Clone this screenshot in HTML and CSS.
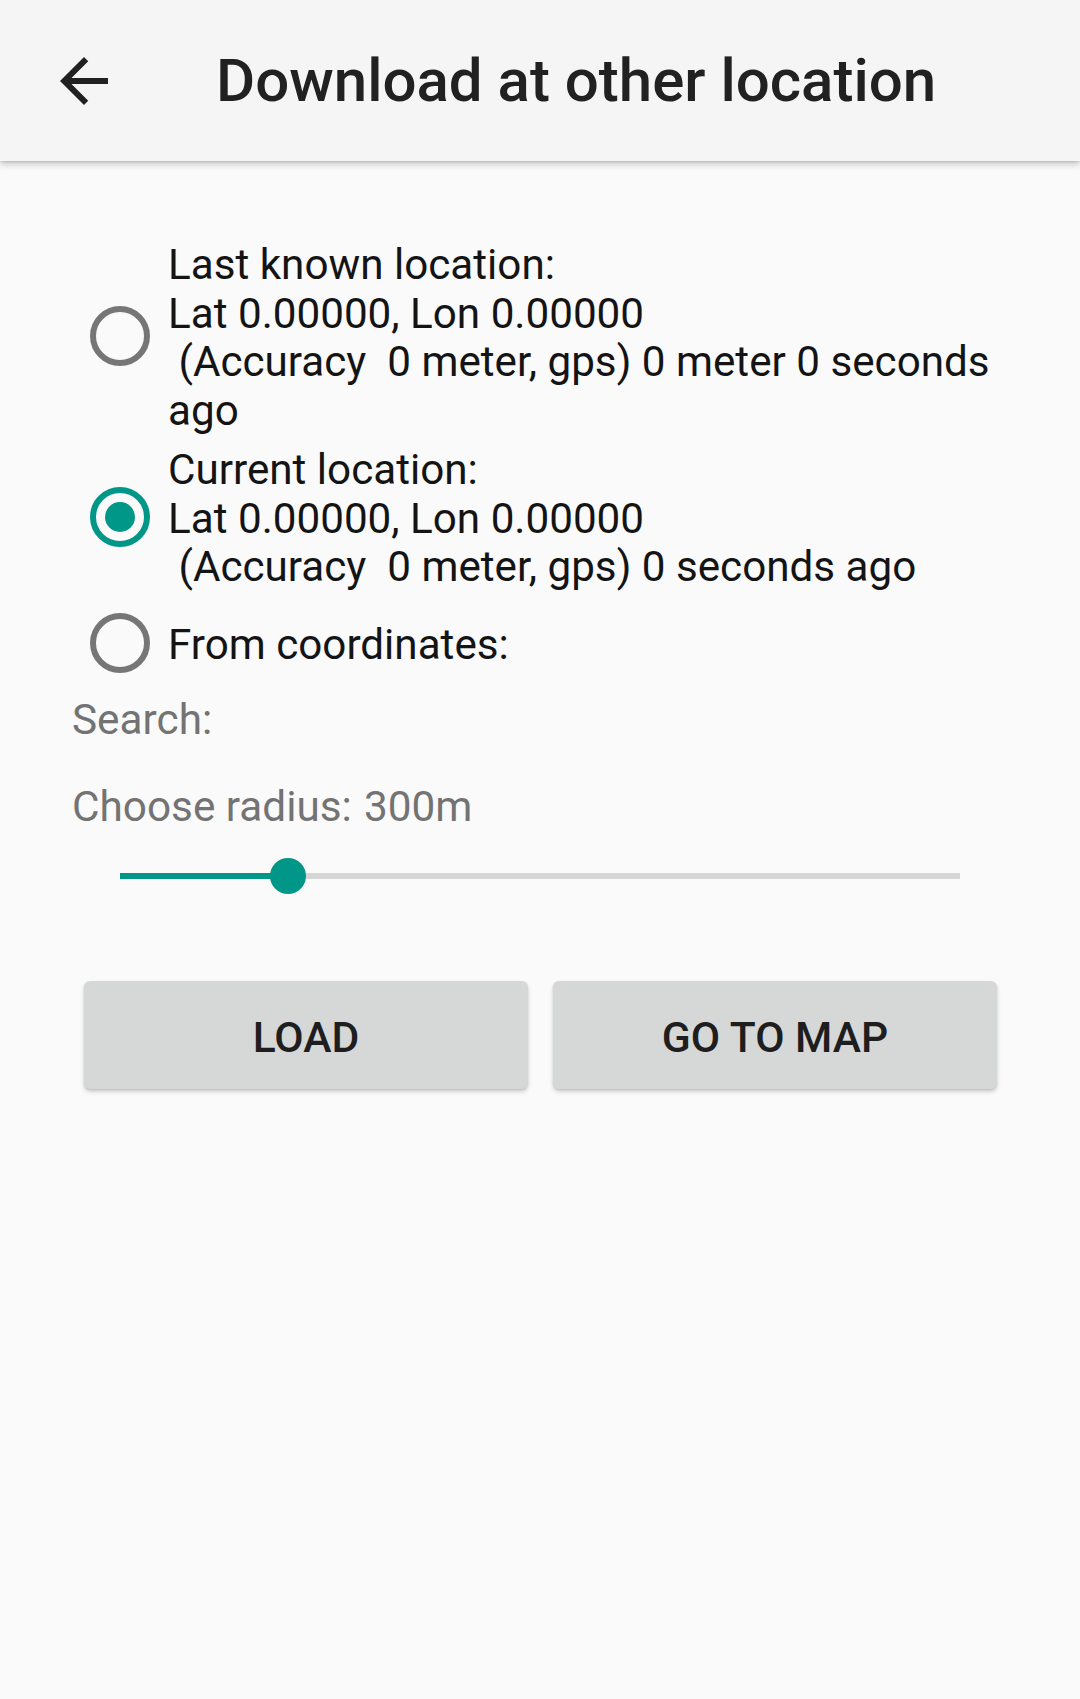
FILE: index.html
```html
<!DOCTYPE html>
<html lang="en">
<head>
<meta charset="utf-8">
<title>Download at other location</title>
<link rel="stylesheet" href="styles.css">
</head>
<body>
<header class="appbar">
  <svg class="back" viewBox="0 0 24 24" width="72" height="72" aria-hidden="true">
    <path d="M20 11H7.83l5.59-5.59L12 4l-8 8 8 8 1.41-1.41L7.83 13H20v-2z" fill="#212121"/>
  </svg>
  <h1 class="title">Download at other location</h1>
</header>
<main class="content">
  <div class="radio-group">
    <div class="radio-row">
      <span class="radio-box"><span class="radio"></span></span>
      <span class="radio-text">Last known location:<br>Lat 0.00000, Lon 0.00000<br> (Accuracy  0 meter, gps) 0 meter 0 seconds ago</span>
    </div>
    <div class="radio-row">
      <span class="radio-box"><span class="radio checked"><span class="dot"></span></span></span>
      <span class="radio-text">Current location:<br>Lat 0.00000, Lon 0.00000<br> (Accuracy  0 meter, gps) 0 seconds ago</span>
    </div>
    <div class="radio-row">
      <span class="radio-box"><span class="radio"></span></span>
      <span class="radio-text">From coordinates:</span>
    </div>
  </div>
  <div class="label search-label">Search:</div>
  <div class="label radius-label"><span>Choose radius:</span><span class="radius-value">300m</span></div>
  <div class="slider">
    <div class="track">
      <div class="fill" style="width: 20%"></div>
      <div class="thumb" style="left: 20%"></div>
    </div>
  </div>
  <div class="buttons">
    <button class="btn">LOAD</button>
    <button class="btn">GO TO MAP</button>
  </div>
</main>
</body>
</html>
```

FILE: styles.css
```css
html, body {
  margin: 0;
  padding: 0;
}
body {
  background: #fafafa;
  font-family: Roboto, "Noto Sans", "Liberation Sans", sans-serif;
  color: #212121;
  width: 1080px;
  min-height: 1699px;
}
.appbar {
  height: 161px;
  background: #f5f5f5;
  display: flex;
  align-items: center;
  padding-left: 48px;
  box-shadow: 0 3px 7px rgba(0, 0, 0, 0.22), 0 1px 2px rgba(0, 0, 0, 0.1);
  position: relative;
  z-index: 1;
  box-sizing: border-box;
}
.back {
  display: block;
  width: 72px;
  height: 72px;
  flex: none;
}
.title {
  margin: 0 0 0 96px;
  font-size: 60px;
  font-weight: 500;
  color: #212121;
  line-height: normal;
  white-space: nowrap;
}
.content {
  padding: 75px 72px 0 72px;
}
.radio-group {
  display: flex;
  flex-direction: column;
  gap: 4px;
}
.radio-row {
  display: flex;
  align-items: center;
  min-height: 92px;
}
.radio-box {
  width: 96px;
  flex: none;
  display: flex;
  align-items: center;
  justify-content: center;
}
.radio {
  width: 60px;
  height: 60px;
  box-sizing: border-box;
  border: 6px solid #767676;
  border-radius: 50%;
  display: flex;
  align-items: center;
  justify-content: center;
}
.radio.checked {
  border-color: #009688;
}
.dot {
  width: 30px;
  height: 30px;
  border-radius: 50%;
  background: #009688;
}
.radio-text {
  font-size: 42.2px;
  line-height: 48.7px;
  color: #141414;
  white-space: pre-wrap;
  padding: 5px 0 1px 0;
}
.label {
  font-size: 42.3px;
  line-height: 48.7px;
  color: #737373;
}
.radius-value {
  margin-left: 12px;
}
.search-label {
  margin-top: 7px;
}
.radius-label {
  margin-top: 38px;
}
.slider {
  height: 48px;
  margin-top: 21px;
  display: flex;
  align-items: center;
  padding: 0 48px;
}
.track {
  position: relative;
  flex: 1;
  height: 6px;
  background: #d6d6d6;
}
.fill {
  height: 100%;
  background: #009688;
}
.thumb {
  position: absolute;
  top: 50%;
  width: 36px;
  height: 36px;
  margin: -18px 0 0 -18px;
  border-radius: 50%;
  background: #009688;
}
.buttons {
  display: flex;
  gap: 25px;
  margin: 81px 11px 0 12px;
}
.btn {
  flex: 1;
  height: 108px;
  border: none;
  border-radius: 6px;
  background: #d6d7d7;
  font-family: Roboto, "Noto Sans", "Liberation Sans", sans-serif;
  font-size: 42.6px;
  font-weight: 500;
  color: #1e1e1e;
  box-shadow: 0 3px 4px rgba(0, 0, 0, 0.16), 0 1px 2px rgba(0, 0, 0, 0.1);
  padding: 3px 0 0 0;
}
```
